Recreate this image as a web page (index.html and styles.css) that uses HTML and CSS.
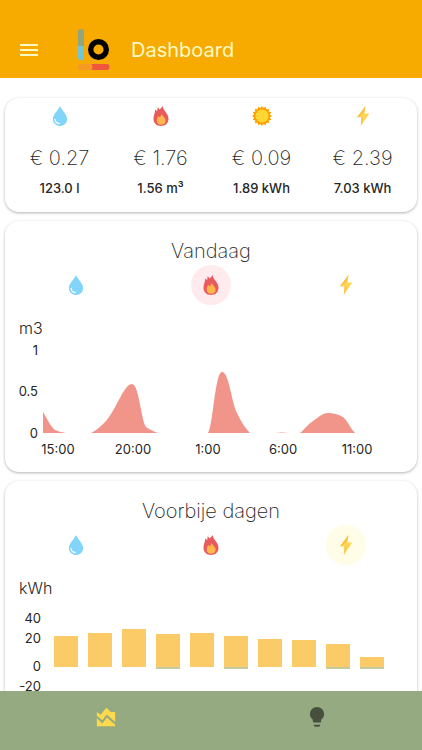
FILE: index.html
```html
<!DOCTYPE html>
<html lang="nl">
<head>
  <meta charset="UTF-8">
  <meta name="viewport" content="width=device-width, initial-scale=1.0">
  <title>Dashboard</title>
  <link rel="stylesheet" href="styles.css">
</head>
<body>
  <!-- shared icons -->
  <svg class="sprite" aria-hidden="true">
    <symbol id="drop" viewBox="0 0 20 20">
      <path fill="#81d4fa" d="M10 0C8.500 4 2.800 8.500 2.800 13.200a7.200 6.800 0 0 0 14.400 0C17.200 8.500 11.500 4 10 0z"/>
      <path fill="none" stroke="#fff" stroke-width="1.300" stroke-linecap="round" d="M5 13.500c.3 2.300 1.800 3.800 4.200 4"/>
    </symbol>
    <symbol id="flame" viewBox="0 0 20 20">
      <path fill="#e95a5c" d="M11.800 0c.2 3 1.500 4.300 3 6.200 1.500 2 2.700 4 2.700 6.800 0 4.200-3.300 7-7.500 7s-7.500-2.800-7.500-7C2.500 9.500 4 7.500 4.200 3.500c.9.400 1.500 1.100 1.800 2C6.500 4 6.600 2.800 6.500 1.300c1 .5 1.600 1.200 2 2.100C9.600 2.500 10.800 1.600 11.800 0z"/>
      <path fill="#ffb74d" d="M10.600 7.500c.3 2.500 4 4 4 7.200 0 2.500-1.900 4.100-4.400 4.100s-4.500-1.600-4.500-4.100c0-1.800.9-3.100 1.300-4.800.8.300 1.200.8 1.500 1.500 1-.9 1.800-2.200 2.100-3.900z"/>
    </symbol>
    <symbol id="sun" viewBox="0 0 20 20">
      <path fill="#ffa000" d="M10 0l1.600 2.100L13.800.8l.7 2.500 2.600-.4-.4 2.600 2.500.7-1.300 2.200L20 10l-2.100 1.600 1.300 2.200-2.500.7.4 2.600-2.600-.4-.7 2.500-2.200-1.300L10 20l-1.600-2.100-2.200 1.300-.7-2.500-2.600.4.400-2.600-2.500-.7 1.300-2.200L0 10l2.100-1.600L.8 6.200l2.500-.7-.4-2.600 2.600.4.700-2.500 2.200 1.300z"/>
      <circle cx="10" cy="10" r="6.500" fill="#fdd835"/>
    </symbol>
    <symbol id="bolt" viewBox="0 0 20 20">
      <path fill="#ffd54f" d="M12.500 0L4 11.300h4.600L7.800 20 16.200 7.500h-4.800z"/>
      <path fill="#fbc04a" d="M12.500 0L4 11.300h1.500L11 6.500zM9 10l-.4 1.300L7.800 20l2.500-7.500z"/>
    </symbol>
  </svg>

  <header class="topbar">
    <button class="menu-btn" aria-label="Menu">
      <svg viewBox="0 0 18 12"><path d="M0 1h18M0 6h18M0 11h18"/></svg>
    </button>
    <svg class="logo" viewBox="0 0 32 42" role="img" aria-label="Logo">
      <rect x="0" y="0" width="6" height="31" rx="3" fill="#92a57c"/>
      <path d="M0 17h6v11a3 3 0 0 1-6 0z" fill="#72c6d6"/>
      <circle cx="20.500" cy="20.500" r="7.800" fill="none" stroke="#000" stroke-width="5.400"/>
      <rect x="0" y="35" width="17" height="6" rx="3" fill="#f59a22"/>
      <path d="M13.500 35H28.500a3 3 0 0 1 0 6H13.500q2-3 0-6z" fill="#f0553f"/>
    </svg>
    <h1>Dashboard</h1>
  </header>

  <main class="content">
    <section class="card totals">
      <div class="total">
        <svg class="icon"><use href="#drop"/></svg>
        <p class="price">€ 0.27</p>
        <p class="amount">123.0 l</p>
      </div>
      <div class="total">
        <svg class="icon"><use href="#flame"/></svg>
        <p class="price">€ 1.76</p>
        <p class="amount">1.56 m³</p>
      </div>
      <div class="total">
        <svg class="icon"><use href="#sun"/></svg>
        <p class="price">€ 0.09</p>
        <p class="amount">1.89 kWh</p>
      </div>
      <div class="total">
        <svg class="icon"><use href="#bolt"/></svg>
        <p class="price">€ 2.39</p>
        <p class="amount">7.03 kWh</p>
      </div>
    </section>

    <section class="card">
      <h2>Vandaag</h2>
      <div class="tabs">
        <button class="tab" aria-label="Water"><svg class="icon"><use href="#drop"/></svg></button>
        <button class="tab gas-active" aria-label="Gas"><svg class="icon"><use href="#flame"/></svg></button>
        <button class="tab" aria-label="Elektriciteit"><svg class="icon"><use href="#bolt"/></svg></button>
      </div>
      <p class="unit">m3</p>
      <svg class="chart" viewBox="0 0 412 132">
        <g class="gas-area">
          <path d="M38 72C42 78 45 86 50 90Q54 92 61 93H38z"/>
          <path d="M86 93C92 90 97 85 101 81C112 68 119 44 127 44C134 44 136 80 141 87Q145 90 153 93z"/>
          <path d="M203 93C208 86 210 32 217 32C224 32 226 60 232 73Q238 86 245 93z"/>
          <path d="M270 93q7-1 14 0z"/>
          <path d="M295 93C299 90 303 84 308 81C315 76 318 73 323 73Q331 73 338 77C343 81 345 88 350 93z"/>
        </g>
        <g class="axis y-axis">
          <text x="33" y="15">1</text>
          <text x="33" y="56">0.5</text>
          <text x="33" y="98">0</text>
        </g>
        <g class="axis x-axis">
          <text x="53" y="114">15:00</text>
          <text x="128" y="114">20:00</text>
          <text x="203" y="114">1:00</text>
          <text x="278" y="114">6:00</text>
          <text x="352" y="114">11:00</text>
        </g>
      </svg>
    </section>

    <section class="card">
      <h2>Voorbije dagen</h2>
      <div class="tabs">
        <button class="tab" aria-label="Water"><svg class="icon"><use href="#drop"/></svg></button>
        <button class="tab" aria-label="Gas"><svg class="icon"><use href="#flame"/></svg></button>
        <button class="tab power-active" aria-label="Elektriciteit"><svg class="icon"><use href="#bolt"/></svg></button>
      </div>
      <p class="unit">kWh</p>
      <svg class="chart" viewBox="0 0 412 132">
        <g class="used">
          <rect x="49" y="36" width="24" height="31"/>
          <rect x="83" y="33" width="24" height="34"/>
          <rect x="117" y="29" width="24" height="38"/>
          <rect x="151" y="34" width="24" height="33"/>
          <rect x="185" y="33" width="24" height="34"/>
          <rect x="219" y="36" width="24" height="31"/>
          <rect x="253" y="39" width="24" height="28"/>
          <rect x="287" y="40" width="24" height="27"/>
          <rect x="321" y="44" width="24" height="23"/>
          <rect x="355" y="57" width="24" height="10"/>
        </g>
        <g class="returned">
          <rect x="151" y="67" width="24" height="2"/>
          <rect x="219" y="67" width="24" height="2"/>
          <rect x="321" y="67" width="24" height="2"/>
          <rect x="355" y="67" width="24" height="2"/>
        </g>
        <g class="axis y-axis">
          <text x="36" y="23">40</text>
          <text x="36" y="43">20</text>
          <text x="36" y="71">0</text>
          <text x="36" y="91">-20</text>
        </g>
      </svg>
    </section>
  </main>

  <nav class="bottombar">
    <a href="#" class="active" aria-label="Grafieken">
      <svg viewBox="0 0 24 24"><path d="M2 13l6 6 5-6.500 9 8V22H2z"/><path d="M2 6.500l4 3L12.500 2 17 6.500h5v11l-9.200-8.200L8 15.500l-6-5z"/></svg>
    </a>
    <a href="#" aria-label="Tips">
      <svg viewBox="0 0 24 24"><path d="M12 1a7.800 7.800 0 0 0-7.800 7.800c0 2.700 1.300 4.600 3.300 6.200v2q0 1 1 1h7q1 0 1-1v-2c2-1.600 3.300-3.500 3.300-6.200A7.800 7.800 0 0 0 12 1zM8.500 20.500h7v.5q0 1.500-1.500 1.500h-4q-1.500 0-1.500-1.500z"/></svg>
    </a>
  </nav>
</body>
</html>
```

FILE: styles.css
```css
* {
  box-sizing: border-box;
}

body {
  margin: 0;
  height: 100vh;
  display: flex;
  flex-direction: column;
  background: #fff;
  color: #262626;
  font-family: Inter, "Liberation Sans", sans-serif;
}

h1, h2, p {
  margin: 0;
}

button {
  padding: 0;
  border: 0;
  background: none;
  cursor: pointer;
}

.sprite {
  display: none;
}

/* top bar */
.topbar {
  flex: none;
  display: flex;
  align-items: center;
  padding: 29px 20px 7px;
  background: #f7aa00;
}

.topbar h1 {
  margin-left: 21px;
  color: #fff9c4;
  font-size: 20px;
  font-weight: 400;
}

.menu-btn svg {
  display: block;
  width: 18px;
  height: 12px;
  stroke: #fff9c4;
  stroke-width: 2;
}

.logo {
  width: 32px;
  height: 42px;
  margin-left: 40px;
}

/* cards */
.content {
  flex: 1;
  min-height: 0;
  overflow-y: auto;
  scrollbar-width: none;
  display: flex;
  flex-direction: column;
  gap: 9px;
  padding: 20px 5px;
}

.card {
  flex: none;
  border-radius: 14px;
  background: #fff;
  box-shadow: 0 1px 3px rgba(0, 0, 0, 0.3);
}

.icon {
  display: block;
  width: 20px;
  height: 20px;
}

.totals {
  display: grid;
  grid-template-columns: repeat(4, 1fr);
  padding: 8px 4px 16px;
}

.total {
  display: flex;
  flex-direction: column;
  align-items: center;
}

.price {
  margin-top: 18px;
  font-size: 20px;
  font-weight: 200;
  line-height: 28px;
}

.amount {
  margin-top: 8px;
  font-size: 13px;
  font-weight: 500;
  line-height: 16px;
}

.card h2 {
  padding-top: 16px;
  font-size: 20px;
  font-weight: 200;
  line-height: 28px;
  text-align: center;
}

.tabs {
  display: grid;
  grid-template-columns: repeat(3, 1fr);
  justify-items: center;
  padding: 0 4px;
}

.tab {
  display: flex;
  align-items: center;
  justify-content: center;
  width: 40px;
  height: 40px;
  border-radius: 50%;
}

.gas-active {
  background: #ffebee;
}

.power-active {
  background: #fffde7;
}

.unit {
  padding: 12px 14px 0;
  font-size: 16px;
  font-weight: 300;
  line-height: 23px;
}

/* charts */
.chart {
  display: block;
  width: 100%;
}

.axis {
  fill: #262626;
  font-size: 13px;
}

.y-axis {
  text-anchor: end;
}

.x-axis {
  text-anchor: middle;
}

.gas-area {
  fill: #f1948a;
}

.used {
  fill: #fbcb68;
}

.returned {
  fill: #c3c9a0;
}

/* bottom bar */
.bottombar {
  flex: none;
  display: grid;
  grid-template-columns: 1fr 1fr;
  background: #96aa82;
}

.bottombar a {
  display: flex;
  justify-content: center;
  padding: 15px 0 22px;
}

.bottombar svg {
  width: 22px;
  height: 22px;
  fill: #47503c;
}

.bottombar .active svg {
  fill: #fdd94b;
}
```
